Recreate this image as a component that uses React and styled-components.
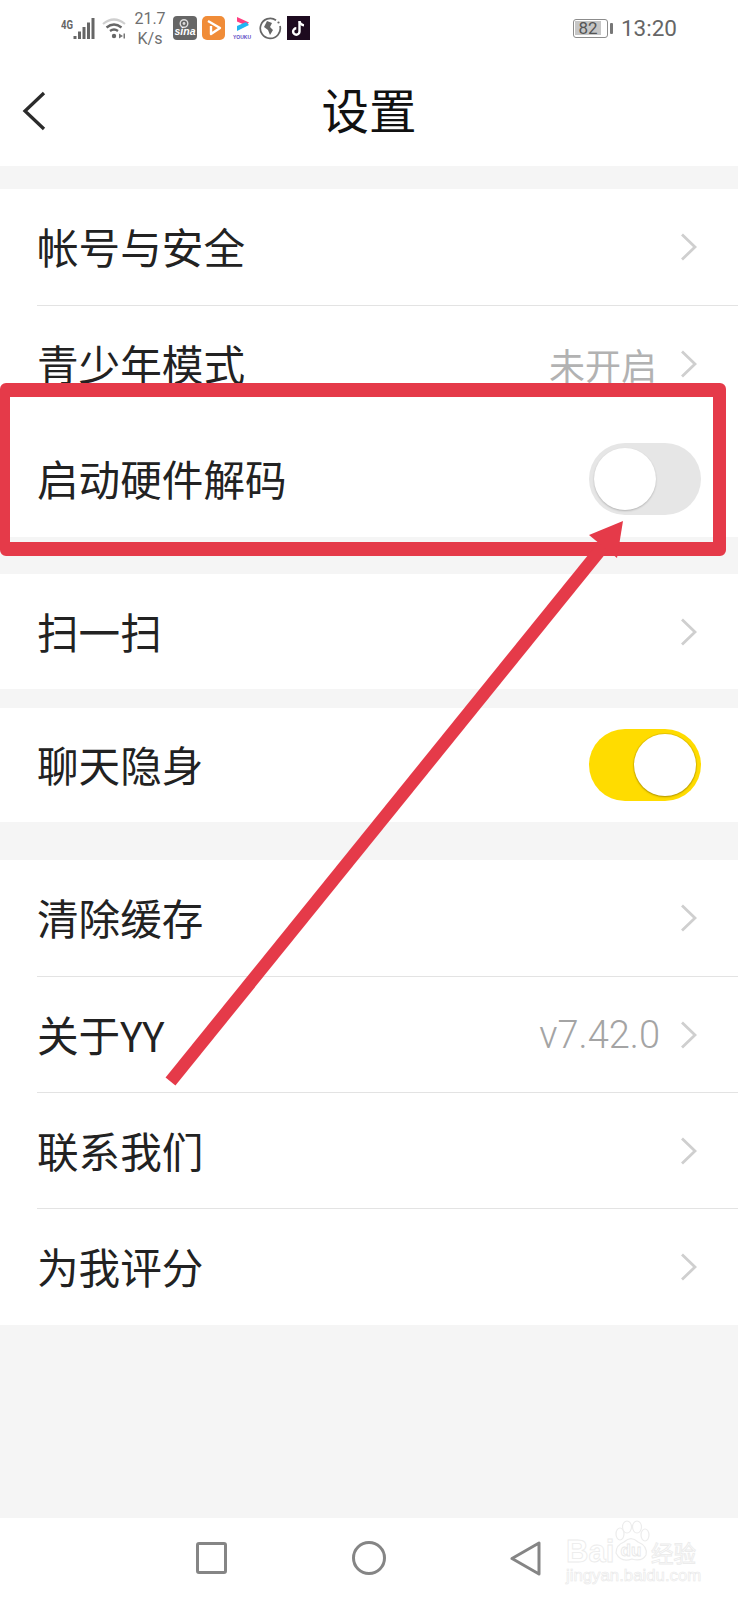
import React from "react";
import styled, { createGlobalStyle } from "styled-components";

const Global = createGlobalStyle`
  html, body { margin: 0; padding: 0; background: #f5f5f5; }
  * { box-sizing: border-box; }
  body { font-family: "Noto Sans CJK SC", "Noto Sans", sans-serif; }
`;

const Page = styled.div`
  position: relative;
  width: 738px;
  height: 1600px;
  background: #f5f5f5;
  overflow: hidden;
  display: flex;
  flex-direction: column;
`;

const StatusBar = styled.div`
  height: 60px;
  background: #fff;
  display: flex;
  align-items: center;
  justify-content: space-between;
  padding: 0 61px 4px 61px;
`;

const StatusGroup = styled.div`
  display: flex;
  align-items: center;
  gap: ${(p) => p.$gap || 7}px;
`;

const Speed = styled.div`
  width: 32px;
  margin: 2px 0 0 1px;
  text-align: center;
  font-family: Roboto, sans-serif;
  font-size: 16px;
  line-height: 20px;
  color: #6f6f6f;
`;

const Battery = styled.div`
  position: relative;
  width: 35px;
  height: 19px;
  border: 1px solid #8c8c8c;
  border-radius: 3px;
  padding: 1.5px;
  margin-right: 6px;
  display: flex;
  &::after {
    content: "";
    position: absolute;
    right: -6px;
    top: 3px;
    width: 3px;
    height: 11px;
    background: #777;
    border-radius: 1px;
  }
`;

const BatteryFill = styled.div`
  width: 84%;
  background: #c6c6c6;
  font-family: Roboto, sans-serif;
  font-size: 17px;
  line-height: 14px;
  color: #555;
  text-align: center;
`;

const Clock = styled.div`
  font-family: Roboto, sans-serif;
  font-size: 22.5px;
  color: #666;
  margin-left: 3px;
`;

const Header = styled.div`
  height: 106px;
  background: #fff;
  display: flex;
  align-items: center;
  justify-content: center;
  position: relative;
`;

const BackIcon = styled.svg`
  position: absolute;
  left: 21px;
  top: 30px;
`;

const Title = styled.h1`
  margin: 0 0 8px 0;
  font-size: 47.5px;
  font-weight: 400;
  color: #111;
  line-height: 1;
`;

const Gap = styled.div`
  height: ${(p) => p.$h}px;
  flex: none;
`;

const Section = styled.div`
  background: #fff;
  flex: none;
`;

const Row = styled.div`
  height: ${(p) => p.$h || 116}px;
  margin-left: 37px;
  padding-right: 37px;
  display: flex;
  align-items: center;
  justify-content: space-between;
  border-bottom: ${(p) => (p.$line ? "1.5px solid #e3e3e3" : "none")};
`;

const Label = styled.div`
  font-size: 41.6px;
  line-height: 1;
  color: #222;
`;

const Right = styled.div`
  display: flex;
  align-items: center;
  gap: ${(p) => p.$gap || 23}px;
`;

const Value = styled.div`
  font-size: 36px;
  line-height: 1;
  color: #b2b2b2;
`;

const Version = styled.div`
  font-family: Roboto, sans-serif;
  font-weight: 300;
  font-size: 38px;
  line-height: 1;
  color: #a4a4a4;
`;

const ChevronIcon = styled.svg`
  margin-right: 4px;
  display: block;
`;

const Toggle = styled.div`
  width: 112px;
  height: 72px;
  border-radius: 36px;
  background: ${(p) => (p.$on ? "#ffdc00" : "#e6e6e6")};
  padding: 5px;
  display: flex;
  justify-content: ${(p) => (p.$on ? "flex-end" : "flex-start")};
`;

const Knob = styled.div`
  width: 62px;
  height: 62px;
  border-radius: 50%;
  background: #fff;
  box-shadow: ${(p) =>
    p.$on
      ? "0 0 0 1px rgba(170,140,0,.25), 0 1px 2px rgba(120,100,0,.55)"
      : "0 1px 2px rgba(0,0,0,.22)"};
`;

const Spacer = styled.div`
  flex: 1;
`;

const NavBar = styled.div`
  height: 82px;
  flex: none;
  background: #fff;
  display: flex;
  align-items: flex-start;
  padding: 24px 0 0 196px;
`;

const NavIcon = styled.svg`
  display: block;
  margin-right: ${(p) => p.$mr || 0}px;
  margin-top: ${(p) => p.$mt || 0}px;
`;

const Frame = styled.div`
  position: absolute;
  left: 0;
  top: 383px;
  width: 726px;
  height: 173px;
  border-style: solid;
  border-color: #e53a49;
  border-width: 14px 13px 14px 10px;
  border-radius: 6px;
`;

const Overlay = styled.svg`
  position: absolute;
  left: 0;
  top: 0;
`;

const Watermark = styled.div`
  position: absolute;
  left: 566px;
  top: 1520px;
  width: 136px;
  height: 66px;
  color: #fff;
  font-family: "Liberation Sans", sans-serif;
  -webkit-text-stroke: 0.9px #ececec;
`;

const WmBai = styled.div`
  position: absolute;
  left: 0;
  top: 16px;
  font-size: 31px;
  line-height: 32px;
  font-weight: 700;
`;

const WmCn = styled.div`
  position: absolute;
  left: 85px;
  top: 20px;
  font-family: "Noto Sans CJK SC", sans-serif;
  font-size: 22.5px;
  line-height: 24px;
  white-space: nowrap;
`;

const WmUrl = styled.div`
  position: absolute;
  left: 0;
  top: 47px;
  font-size: 16.8px;
  line-height: 18px;
  white-space: nowrap;
  -webkit-text-stroke: 0.6px #e8e8e8;
`;

const WmPaw = styled.svg`
  position: absolute;
  left: 45px;
  top: 0;
`;

const Chevron = () => (
  <ChevronIcon width="17" height="28" viewBox="0 0 17 28">
    <path d="M2 1.5 L15 14 L2 26.5" fill="none" stroke="#cfcfcf" strokeWidth="2.8" />
  </ChevronIcon>
);

const Signal = () => (
  <svg width="34" height="23" viewBox="0 0 34 23">
    <text x="0" y="11.5" fontFamily="Roboto, sans-serif" fontSize="13" fontWeight="700" fill="#666" textLength="12" lengthAdjust="spacingAndGlyphs">4G</text>
    {[[12.5, 19], [17, 14.5], [21.5, 10], [26, 5.5], [30.5, 1]].map(([x, y], i) => (
      <rect key={i} x={x} y={y} width="3" height={22 - y} fill="#666" />
    ))}
  </svg>
);

const Wifi = () => (
  <svg width="24" height="22" viewBox="0 0 24 22">
    <path d="M1 7 Q12 -2 23 7" fill="none" stroke="#cfcfcf" strokeWidth="2.2" />
    <path d="M4.5 10.5 Q12 4.5 19.5 10.5" fill="none" stroke="#666" strokeWidth="2.3" />
    <path d="M8 14 Q12 11 16 14" fill="none" stroke="#666" strokeWidth="2.3" />
    <circle cx="12" cy="19" r="2.2" fill="#666" />
    <path d="M17 16.5 L21 19 L17 21.5 Z M21.5 16.5 h1.5 v5 h-1.5 Z" fill="#777" />
  </svg>
);

const Sina = () => (
  <svg width="24" height="24" viewBox="0 0 24 24">
    <rect width="24" height="24" rx="4" fill="#666" />
    <circle cx="11" cy="7.5" r="3.8" fill="none" stroke="#ddd" strokeWidth="1.4" />
    <circle cx="11" cy="7.5" r="1.4" fill="#ddd" />
    <text x="12" y="18.5" textAnchor="middle" fontFamily="Liberation Sans, sans-serif" fontSize="11" fontStyle="italic" fontWeight="700" fill="#fff" textLength="21" lengthAdjust="spacingAndGlyphs">sina</text>
  </svg>
);

const Player = () => (
  <svg width="23" height="24" viewBox="0 0 23 24">
    <rect width="23" height="24" rx="5" fill="#f08c38" />
    <path d="M6 5 L18 12 L9 18 L9 10" fill="none" stroke="#fff" strokeWidth="2.4" strokeLinejoin="round" />
  </svg>
);

const Youku = () => (
  <svg width="24" height="24" viewBox="0 0 24 24">
    <path d="M7 1 L19 6.5 L16 9.5 L7 5.5 Z" fill="#ff3d7f" />
    <path d="M7 15 L19 9 L16 6 L7 10 Z" fill="#1fb6f2" />
    <text x="12" y="22.5" textAnchor="middle" fontFamily="Liberation Sans, sans-serif" fontSize="6" fontWeight="700" fill="#5d4bc4" textLength="18" lengthAdjust="spacingAndGlyphs">YOUKU</text>
  </svg>
);

const Globe = () => (
  <svg width="23" height="23" viewBox="0 0 23 23">
    <path d="M17 3.2 A10 10 0 1 0 21 9" fill="none" stroke="#666" strokeWidth="1.7" />
    <path d="M8 4 L13 6 L11 10 L14 13 L11 18 L9 13 L5 10 Z" fill="#666" />
    <circle cx="19.5" cy="5.5" r="1.1" fill="#666" />
  </svg>
);

const TikTok = () => (
  <svg width="23" height="24" viewBox="0 0 23 24">
    <rect width="23" height="24" fill="#1d0a1f" />
    <path d="M12.5 5 V15.5 A3.2 3.2 0 1 1 9.3 12.3" fill="none" stroke="#fff" strokeWidth="2.4" />
    <path d="M12.5 5.5 Q13.5 9 17 9.3" fill="none" stroke="#fff" strokeWidth="2.2" />
  </svg>
);

export default function App() {
  return (
    <Page>
      <Global />
      <StatusBar>
        <StatusGroup>
          <Signal />
          <Wifi />
          <Speed>21.7 K/s</Speed>
          <StatusGroup $gap={5}>
            <Sina />
            <Player />
            <Youku />
            <Globe />
            <TikTok />
          </StatusGroup>
        </StatusGroup>
        <StatusGroup $gap={4}>
          <Battery>
            <BatteryFill>82</BatteryFill>
          </Battery>
          <Clock>13:20</Clock>
        </StatusGroup>
      </StatusBar>

      <Header>
        <BackIcon width="26" height="42" viewBox="0 0 26 42">
          <path d="M23 3 L4 21 L23 39" fill="none" stroke="#2b2b2b" strokeWidth="3.3" />
        </BackIcon>
        <Title>设置</Title>
      </Header>

      <Gap $h={23} />
      <Section>
        <Row $line $h={117}>
          <Label>帐号与安全</Label>
          <Chevron />
        </Row>
        <Row $h={115}>
          <Label>青少年模式</Label>
          <Right>
            <Value>未开启</Value>
            <Chevron />
          </Right>
        </Row>
        <Row>
          <Label>启动硬件解码</Label>
          <Toggle>
            <Knob />
          </Toggle>
        </Row>
      </Section>

      <Gap $h={37} />
      <Section>
        <Row $h={115}>
          <Label>扫一扫</Label>
          <Chevron />
        </Row>
      </Section>

      <Gap $h={19} />
      <Section>
        <Row $h={114}>
          <Label>聊天隐身</Label>
          <Toggle $on>
            <Knob $on />
          </Toggle>
        </Row>
      </Section>

      <Gap $h={38} />
      <Section>
        <Row $line $h={117}>
          <Label>清除缓存</Label>
          <Chevron />
        </Row>
        <Row $line>
          <Label>关于YY</Label>
          <Right $gap={20}>
            <Version>v7.42.0</Version>
            <Chevron />
          </Right>
        </Row>
        <Row $line>
          <Label>联系我们</Label>
          <Chevron />
        </Row>
        <Row>
          <Label>为我评分</Label>
          <Chevron />
        </Row>
      </Section>

      <Spacer />

      <NavBar>
        <NavIcon $mr={125} width="31" height="32" viewBox="0 0 31 32">
          <rect x="1.5" y="1.5" width="28" height="29" rx="1.5" fill="none" stroke="#858585" strokeWidth="3" />
        </NavIcon>
        <NavIcon $mr={124} $mt={-1} width="34" height="34" viewBox="0 0 34 34">
          <circle cx="17" cy="17" r="15.5" fill="none" stroke="#858585" strokeWidth="3" />
        </NavIcon>
        <NavIcon $mt={-1} width="31" height="35" viewBox="0 0 31 35">
          <path d="M29 2 V33 L2 17.5 Z" fill="none" stroke="#858585" strokeWidth="3" strokeLinejoin="round" />
        </NavIcon>
      </NavBar>

      <Watermark>
        <WmPaw width="40" height="44" viewBox="0 0 40 44">
          <g fill="#fff" stroke="#ececec" strokeWidth="1.2">
            <ellipse cx="9" cy="14" rx="4" ry="6" />
            <ellipse cx="16" cy="7" rx="4.5" ry="6" />
            <ellipse cx="26" cy="7" rx="4.5" ry="6" />
            <ellipse cx="34" cy="15" rx="4" ry="6" />
            <path d="M5 33 Q5 25 13 22 Q20 15 27 22 Q37 26 35 35 Q31 42 21 39 Q10 43 5 33 Z" />
          </g>
          <text x="20" y="36" textAnchor="middle" fontFamily="Liberation Sans, sans-serif" fontSize="17" fontWeight="700" fill="#fff" stroke="#e8e8e8" strokeWidth="0.8">du</text>
        </WmPaw>
        <WmBai>Bai</WmBai>
        <WmCn>经验</WmCn>
        <WmUrl>jingyan.baidu.com</WmUrl>
      </Watermark>

      <Frame />
      <Overlay width="738" height="1600" viewBox="0 0 738 1600">
        <line x1="170.5" y1="1081.5" x2="606" y2="543" stroke="#e53a49" strokeWidth="12.7" />
        <polygon points="623,521 589,535 617,558" fill="#e53a49" />
      </Overlay>
    </Page>
  );
}
